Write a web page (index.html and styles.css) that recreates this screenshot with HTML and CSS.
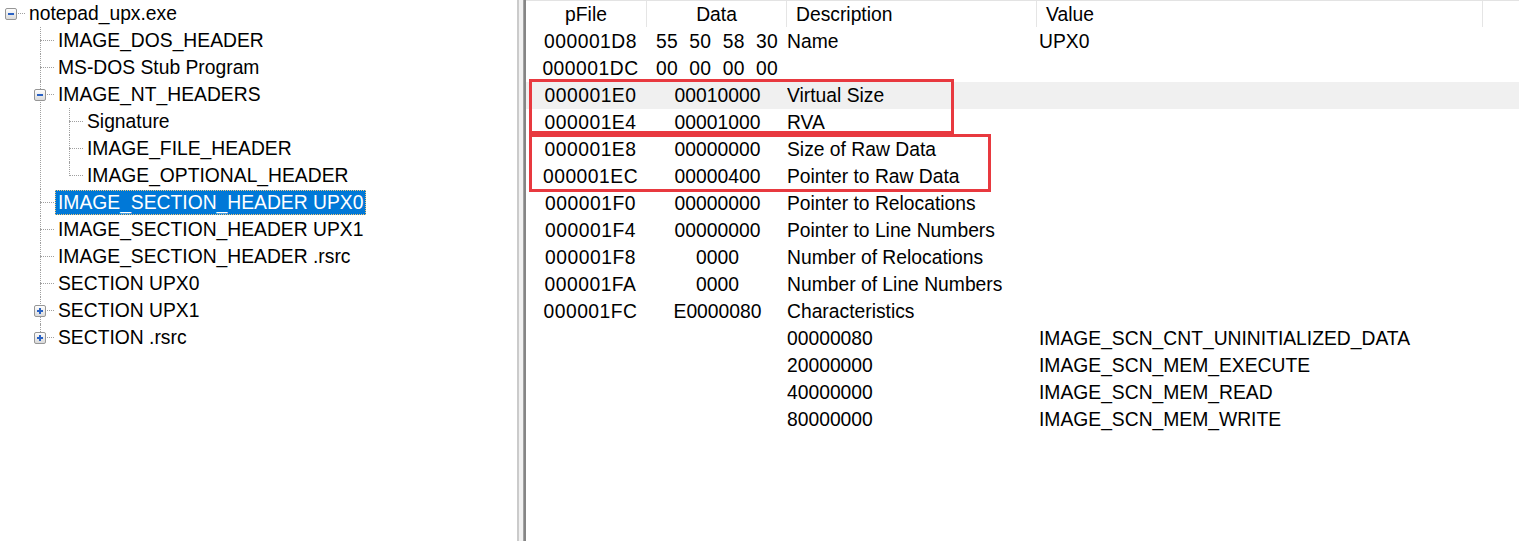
FILE: index.html
```html
<!DOCTYPE html>
<html>
<head>
<meta charset="utf-8">
<title>PEview - notepad_upx.exe</title>
<link rel="stylesheet" href="styles.css">
</head>
<body>
<div class="app">
  <div class="tree-pane">
    <ul class="tree">
      <li class="root">
        <div class="label"><span class="exp minus"></span><span class="txt">notepad_upx.exe</span></div>
        <ul>
          <li><div class="label"><span class="txt">IMAGE_DOS_HEADER</span></div></li>
          <li><div class="label"><span class="txt">MS-DOS Stub Program</span></div></li>
          <li>
            <div class="label"><span class="exp minus"></span><span class="txt">IMAGE_NT_HEADERS</span></div>
            <ul>
              <li><div class="label"><span class="txt">Signature</span></div></li>
              <li><div class="label"><span class="txt">IMAGE_FILE_HEADER</span></div></li>
              <li><div class="label"><span class="txt">IMAGE_OPTIONAL_HEADER</span></div></li>
            </ul>
          </li>
          <li><div class="label"><span class="txt selected">IMAGE_SECTION_HEADER UPX0</span></div></li>
          <li><div class="label"><span class="txt">IMAGE_SECTION_HEADER UPX1</span></div></li>
          <li><div class="label"><span class="txt">IMAGE_SECTION_HEADER .rsrc</span></div></li>
          <li><div class="label"><span class="txt">SECTION UPX0</span></div></li>
          <li><div class="label"><span class="exp plus"></span><span class="txt">SECTION UPX1</span></div></li>
          <li><div class="label"><span class="exp plus"></span><span class="txt">SECTION .rsrc</span></div></li>
        </ul>
      </li>
    </ul>
  </div>
  <div class="splitter"></div>
  <div class="list-pane">
    <div class="grid head">
      <div class="hc center">pFile</div>
      <div class="hc center">Data</div>
      <div class="hc left">Description</div>
      <div class="hc left">Value</div>
      <div class="hc last"></div>
    </div>
    <div class="grid row"><div class="c pfile">000001D8</div><div class="c data bytes">55  50  58  30</div><div class="c desc">Name</div><div class="c val">UPX0</div><div class="c"></div></div>
    <div class="grid row"><div class="c pfile">000001DC</div><div class="c data bytes">00  00  00  00</div><div class="c desc"></div><div class="c val"></div><div class="c"></div></div>
    <div class="grid row hot"><div class="c pfile">000001E0</div><div class="c data">00010000</div><div class="c desc">Virtual Size</div><div class="c val"></div><div class="c"></div></div>
    <div class="grid row"><div class="c pfile">000001E4</div><div class="c data">00001000</div><div class="c desc">RVA</div><div class="c val"></div><div class="c"></div></div>
    <div class="grid row"><div class="c pfile">000001E8</div><div class="c data">00000000</div><div class="c desc">Size of Raw Data</div><div class="c val"></div><div class="c"></div></div>
    <div class="grid row"><div class="c pfile">000001EC</div><div class="c data">00000400</div><div class="c desc">Pointer to Raw Data</div><div class="c val"></div><div class="c"></div></div>
    <div class="grid row"><div class="c pfile">000001F0</div><div class="c data">00000000</div><div class="c desc">Pointer to Relocations</div><div class="c val"></div><div class="c"></div></div>
    <div class="grid row"><div class="c pfile">000001F4</div><div class="c data">00000000</div><div class="c desc">Pointer to Line Numbers</div><div class="c val"></div><div class="c"></div></div>
    <div class="grid row"><div class="c pfile">000001F8</div><div class="c data">0000</div><div class="c desc">Number of Relocations</div><div class="c val"></div><div class="c"></div></div>
    <div class="grid row"><div class="c pfile">000001FA</div><div class="c data">0000</div><div class="c desc">Number of Line Numbers</div><div class="c val"></div><div class="c"></div></div>
    <div class="grid row"><div class="c pfile">000001FC</div><div class="c data">E0000080</div><div class="c desc">Characteristics</div><div class="c val"></div><div class="c"></div></div>
    <div class="grid row"><div class="c pfile"></div><div class="c data"></div><div class="c desc">00000080</div><div class="c val">IMAGE_SCN_CNT_UNINITIALIZED_DATA</div><div class="c"></div></div>
    <div class="grid row"><div class="c pfile"></div><div class="c data"></div><div class="c desc">20000000</div><div class="c val">IMAGE_SCN_MEM_EXECUTE</div><div class="c"></div></div>
    <div class="grid row"><div class="c pfile"></div><div class="c data"></div><div class="c desc">40000000</div><div class="c val">IMAGE_SCN_MEM_READ</div><div class="c"></div></div>
    <div class="grid row"><div class="c pfile"></div><div class="c data"></div><div class="c desc">80000000</div><div class="c val">IMAGE_SCN_MEM_WRITE</div><div class="c"></div></div>

    <div class="mark mark-1"></div>
    <div class="mark mark-2"></div>
  </div>
</div>
</body>
</html>
```

FILE: styles.css
```css
html, body {
  margin: 0;
  padding: 0;
  background: #ffffff;
  overflow: hidden;
}

body {
  font-family: "Liberation Sans", Arial, sans-serif;
  font-size: 19.3px;
  color: #000000;
}

.app {
  display: flex;
  width: 1519px;
  height: 541px;
}

/* ---------- tree pane ---------- */
.tree-pane {
  width: 517px;
  flex: none;
  background: #ffffff;
}

.tree,
.tree ul {
  list-style: none;
  margin: 0;
  padding: 0;
}

.tree ul {
  padding-left: 29px;
}

.tree li {
  position: relative;
}

/* vertical connector */
.tree ul > li::before {
  content: "";
  position: absolute;
  left: 11px;
  top: 0;
  bottom: 0;
  border-left: 1px dotted #a0a0a0;
}

.tree ul > li:last-child::before {
  bottom: auto;
  height: 14px;
}

/* horizontal connector */
.tree li::after {
  content: "";
  position: absolute;
  left: 11px;
  top: 13px;
  width: 14px;
  border-top: 1px dotted #a0a0a0;
}

.label {
  height: 27px;
  display: flex;
  align-items: center;
  padding-left: 26px;
  white-space: nowrap;
}

.txt {
  display: inline-block;
  padding: 0 3px;
  line-height: 25px;
  height: 25px;
  position: relative;
  z-index: 1;
}

.txt.selected {
  background: #0078d7;
  color: #ffffff;
  outline: 1px dotted #f3c77a;
  outline-offset: -1px;
}

.exp {
  position: absolute;
  left: 5px;
  top: 8px;
  width: 12px;
  height: 12px;
  box-sizing: border-box;
  border: 1px solid #969696;
  border-radius: 2px;
  background: linear-gradient(#fdfdfd, #dadada);
  z-index: 2;
}

.exp::before {
  content: "";
  position: absolute;
  left: 2px;
  top: 4px;
  width: 6px;
  height: 2px;
  background: #2a62c4;
}

.exp.plus::after {
  content: "";
  position: absolute;
  left: 4px;
  top: 2px;
  width: 2px;
  height: 6px;
  background: #2a62c4;
}

/* ---------- splitter ---------- */
.splitter {
  width: 9px;
  flex: none;
  background: linear-gradient(to right,
    #cbcbcb 0, #cbcbcb 2px,
    #f1f1f1 2px, #f1f1f1 6px,
    #a3a3a3 6px, #a3a3a3 7px,
    #858585 7px, #858585 9px);
}

/* ---------- list pane ---------- */
.list-pane {
  flex: 1;
  position: relative;
  background: #ffffff;
}

.grid {
  display: grid;
  grid-template-columns: 121px 140px 250px 446px 1fr;
}

.head {
  height: 28px;
  box-sizing: border-box;
  border-top: 1px solid #e3e3e3;
}

.hc {
  height: 26px;
  line-height: 27px;
  border-right: 1px solid #e5e5e5;
  white-space: nowrap;
}

.hc.center { text-align: center; }
.hc.left { padding-left: 9px; }
.hc.last { border-right: none; }

.row {
  height: 27px;
  line-height: 27px;
}

.row.hot {
  background: #f0f0f0;
}

.c {
  white-space: pre;
  overflow: hidden;
}

.pfile {
  text-align: center;
  padding-left: 8px;
  letter-spacing: 0.5px;
}

.data {
  text-align: center;
  padding-left: 1px;
}

.bytes {
  padding-left: 0;
  letter-spacing: 0.3px;
}

.desc {
  padding-left: 0;
}

.val {
  padding-left: 2px;
}

/* red annotation boxes drawn over the list */
.mark {
  position: absolute;
  border: 3px solid #e8393f;
  box-sizing: border-box;
  pointer-events: none;
}

.mark-1 {
  left: 3px;
  top: 79px;
  width: 425px;
  height: 55px;
}

.mark-2 {
  left: 3px;
  top: 134px;
  width: 462px;
  height: 58px;
}
```
